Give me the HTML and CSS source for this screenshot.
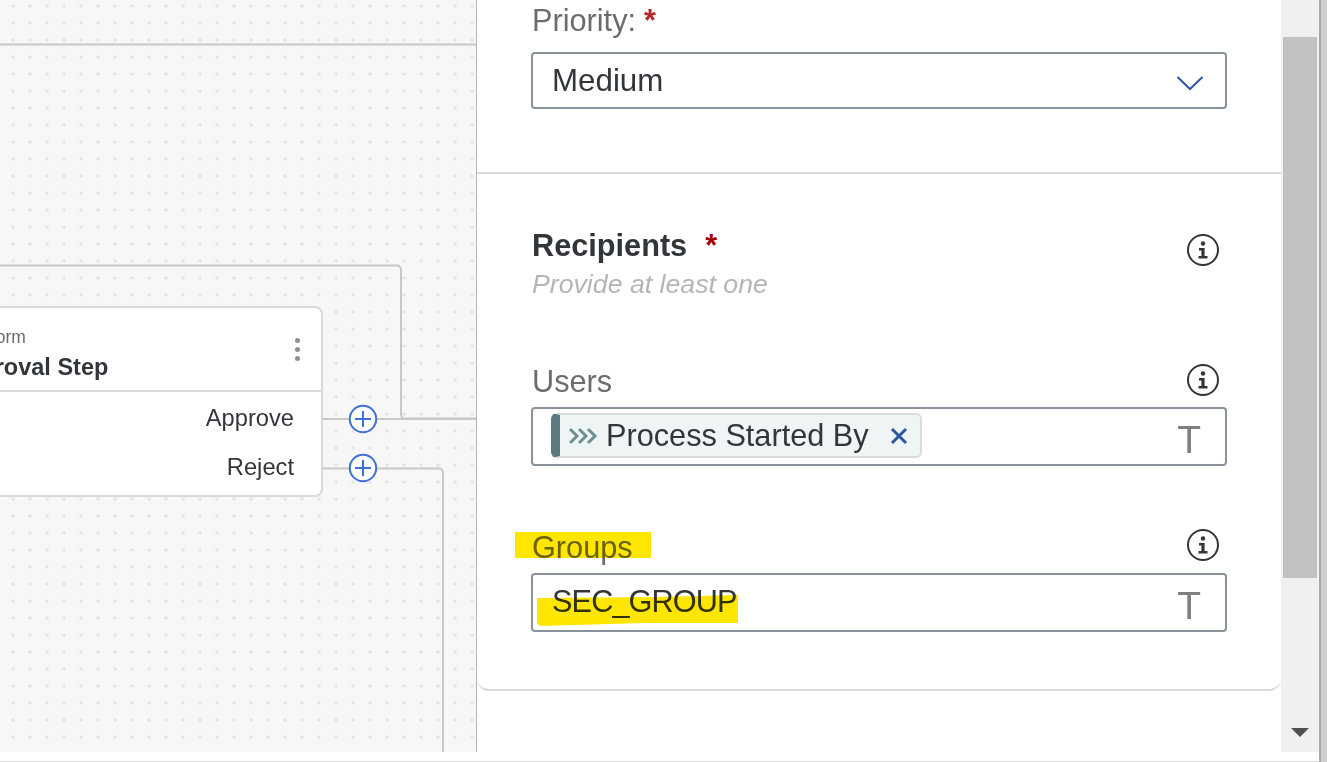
FILE: index.html
```html
<!DOCTYPE html>
<html lang="en">
<head>
    <meta charset="UTF-8">
    <meta name="viewport" content="width=device-width, initial-scale=1.0">
    <title>Form Step - Properties</title>
    <link rel="stylesheet" href="styles.css">
</head>
<body>
    <div class="window">
        <div class="canvas">
            <svg class="links" width="476" height="752">
                <path d="M0 44.5H476"/>
                <path d="M0 265.5H397a4 4 0 0 1 4 4V414.5a4 4 0 0 0 4 4H476"/>
                <path d="M322 419H476"/>
                <path d="M322 468.5H439a4 4 0 0 1 4 4V752"/>
            </svg>

            <div class="node">
                <div class="node-head">
                    <div class="node-type">Form</div>
                    <div class="node-name">Approval Step</div>
                    <div class="node-menu"><i></i><i></i><i></i></div>
                </div>
                <div class="node-outcomes">
                    <div>Approve</div>
                    <div>Reject</div>
                </div>
            </div>

            <svg class="add add-approve" width="30" height="30" viewBox="0 0 30 30">
                <circle cx="15" cy="15" r="13.2"/>
                <path d="M15 7V23M7 15H23"/>
            </svg>
            <svg class="add add-reject" width="30" height="30" viewBox="0 0 30 30">
                <circle cx="15" cy="15" r="13.2"/>
                <path d="M15 7V23M7 15H23"/>
            </svg>
        </div>

        <div class="panel">
            <div class="section section-top">
                <label class="field-label">Priority:<span class="req">*</span></label>
                <div class="input">
                    <span>Medium</span>
                    <svg class="chevron" width="28" height="16" viewBox="0 0 28 16"><path d="M1.5 2L14 14L26.5 2"/></svg>
                </div>
            </div>

            <div class="section section-recipients">
                <div class="title-row">
                    <div>
                        <h2>Recipients<span class="req-bold">*</span></h2>
                        <p class="hint">Provide at least one</p>
                    </div>
                    <svg class="info" width="34" height="34" viewBox="0 0 34 34">
                        <circle cx="17" cy="17" r="15"/>
                        <circle class="dot" cx="17" cy="10.5" r="2.2"/>
                        <path class="stem" d="M13 15H18.6V23H21.5V25.5H12.5V23H15.4V17.5H13Z"/>
                    </svg>
                </div>

                <div class="label-row label-users">
                    <label class="field-label">Users</label>
                    <svg class="info" width="34" height="34" viewBox="0 0 34 34">
                        <circle cx="17" cy="17" r="15"/>
                        <circle class="dot" cx="17" cy="10.5" r="2.2"/>
                        <path class="stem" d="M13 15H18.6V23H21.5V25.5H12.5V23H15.4V17.5H13Z"/>
                    </svg>
                </div>
                <div class="input input-tall">
                    <div class="token">
                        <svg class="token-icon" width="30" height="18" viewBox="0 0 30 18">
                            <path d="M2 2L9 9L2 16M11 2L18 9L11 16M20 2L27 9L20 16"/>
                        </svg>
                        <span>Process Started By</span>
                        <svg class="token-close" width="20" height="20" viewBox="0 0 20 20"><path d="M3 3L17 17M17 3L3 17"/></svg>
                    </div>
                    <span class="type-icon">T</span>
                </div>

                <div class="label-row">
                    <label class="field-label">Groups</label>
                    <svg class="info" width="34" height="34" viewBox="0 0 34 34">
                        <circle cx="17" cy="17" r="15"/>
                        <circle class="dot" cx="17" cy="10.5" r="2.2"/>
                        <path class="stem" d="M13 15H18.6V23H21.5V25.5H12.5V23H15.4V17.5H13Z"/>
                    </svg>
                </div>
                <div class="input input-tall">
                    <span class="group-value">SEC_GROUP</span>
                    <span class="type-icon">T</span>
                </div>
            </div>

            <!-- marker pen strokes added on top of the screenshot -->
            <div class="marker marker-label"></div>
            <svg class="marker-value" width="204" height="32" viewBox="0 0 204 32">
                <path d="M2 4L120 3L203 1V29L110 29L40 31L6 32L2 30Z"/>
            </svg>
        </div>

        <div class="scrollbar">
            <div class="scroll-thumb"></div>
            <div class="scroll-down"></div>
        </div>
        <div class="window-edge"></div>
        <div class="window-side"></div>
    </div>
    <div class="bottom-strip"></div>
</body>
</html>
```

FILE: styles.css
```css
* {
    margin: 0;
    padding: 0;
    box-sizing: border-box;
}

body {
    font-family: 'Liberation Sans', Arial, sans-serif;
    background-color: white;
    width: 1327px;
    height: 762px;
    overflow: hidden;
}

.window {
    display: flex;
    height: 761px;
}

/* workflow canvas */
.canvas {
    position: relative;
    width: 477px;
    height: 752px;
    overflow: hidden;
    background-color: #f7f7f7;
    background-image: radial-gradient(circle at center, #e3e3e3 1.4px, transparent 1.5px);
    background-size: 17px 17px;
    background-position: 4.5px -2.5px;
    border-right: 1px solid #b5b5b5;
}

.links {
    position: absolute;
    left: 0;
    top: 0;
}

.links path {
    fill: none;
    stroke: #c8c8c8;
    stroke-width: 2;
}

.node {
    position: absolute;
    left: -120px;
    top: 306px;
    width: 443px;
    height: 191px;
    background-color: white;
    border: 2px solid #d9d9d9;
    border-radius: 8px;
}

.node-head {
    position: relative;
    height: 84px;
    padding: 16px 0 0 67px;
    border-bottom: 2px solid #d9d9d9;
}

.node-type {
    margin-left: 36px;
    font-size: 17.5px;
    color: #6a6d70;
    line-height: 26px;
}

.node-name {
    margin-top: 1px;
    font-size: 23.5px;
    font-weight: bold;
    color: #32363a;
    line-height: 32px;
}

.node-menu {
    position: absolute;
    right: 21px;
    top: 30px;
    display: flex;
    flex-direction: column;
    gap: 4px;
}

.node-menu i {
    display: block;
    width: 5px;
    height: 5px;
    border-radius: 50%;
    background-color: #89919a;
}

.node-outcomes {
    padding: 2px 27px 0 0;
    text-align: right;
    font-size: 23.7px;
    color: #32363a;
}

.node-outcomes div {
    height: 49px;
    line-height: 49px;
}

.add {
    position: absolute;
    left: 348px;
}

.add circle {
    fill: white;
    stroke: #3f6fd8;
    stroke-width: 2;
}

.add path {
    fill: none;
    stroke: #3f6fd8;
    stroke-width: 2;
}

.add-approve {
    top: 404px;
}

.add-reject {
    top: 453px;
}

/* properties panel */
.panel {
    position: relative;
    width: 804px;
    height: 752px;
    background-color: white;
    color: #32363a;
}

.section {
    padding: 0 54px;
}

.section-top {
    height: 174px;
    border-bottom: 2px solid #d9d9d9;
}

.section-recipients {
    height: 517px;
    border-bottom: 2px solid #d9d9d9;
    border-radius: 0 0 12px 12px;
}

.field-label {
    display: block;
    padding-left: 1px;
    font-size: 30.7px;
    line-height: 42px;
    color: #6a6d70;
}

.label-row .field-label {
    margin-top: 3px;
}

.req {
    color: #b3272a;
    font-weight: bold;
    margin-left: 8px;
}

.input {
    display: flex;
    align-items: center;
    justify-content: space-between;
    height: 57px;
    padding: 0 21px 0 19px;
    border: 2px solid #89919a;
    border-radius: 4px;
    font-size: 30.7px;
    color: #32363a;
}

.section-top .input {
    margin-top: 10px;
    font-size: 31.3px;
}

.input-tall {
    height: 59px;
    padding: 0 24px 0 18px;
}

.group-value {
    margin: 0 0 2px 1px;
    letter-spacing: -0.9px;
}

.chevron {
    margin-top: 4px;
}

.chevron path {
    fill: none;
    stroke: #2f55a4;
    stroke-width: 2;
}

.title-row {
    display: flex;
    justify-content: space-between;
    align-items: flex-start;
    padding-top: 50px;
    padding-right: 7px;
}

.title-row .info {
    margin-top: 9px;
}

h2 {
    padding-left: 1px;
    font-size: 30.7px;
    font-weight: bold;
    line-height: 44px;
}

.req-bold {
    color: #a5000c;
    margin-left: 18px;
}

.hint {
    padding-left: 1px;
    font-size: 26.7px;
    font-style: italic;
    color: #b5b5b5;
    line-height: 32px;
}

.label-row {
    display: flex;
    justify-content: space-between;
    align-items: center;
    height: 54px;
    margin-top: 53px;
    padding-right: 7px;
}

.label-row .info {
    margin-bottom: 2px;
}

.label-users .info {
    margin-bottom: 0;
}

.info circle {
    fill: none;
    stroke: #32363a;
    stroke-width: 2;
}

.info .dot,
.info .stem {
    fill: #32363a;
    stroke: none;
}

.token {
    display: flex;
    align-items: center;
    width: 371px;
    height: 45px;
    margin-bottom: 2px;
    padding-left: 8px;
    background-color: #eff4f4;
    border: 2px solid #d9dcdc;
    border-left: 9px solid #5b7b7f;
    border-radius: 6px;
}

.token-icon {
    margin-right: 8px;
}

.token-icon path {
    fill: none;
    stroke: #6f9093;
    stroke-width: 3;
}

.token-close {
    margin-left: 20px;
}

.token-close path {
    fill: none;
    stroke: #2f55a4;
    stroke-width: 3;
}

.type-icon {
    margin-top: 6px;
    font-size: 39px;
    color: #808080;
    line-height: 1;
}

/* yellow marker */
.marker {
    position: absolute;
    left: 38px;
    top: 532px;
    width: 136px;
    height: 26px;
    background-color: #ffe600;
    mix-blend-mode: multiply;
}

.marker-value {
    position: absolute;
    left: 58px;
    top: 594px;
    mix-blend-mode: multiply;
}

.marker-value path {
    fill: #ffe600;
}

/* scrollbar */
.scrollbar {
    position: relative;
    width: 38px;
    height: 752px;
    background-color: #f0f0f0;
    padding: 37px 2px 0;
}

.scroll-thumb {
    height: 541px;
    background-color: #c1c1c1;
}

.scroll-down {
    position: absolute;
    left: 10px;
    top: 728px;
    width: 0;
    height: 0;
    border-left: 9px solid transparent;
    border-right: 9px solid transparent;
    border-top: 9px solid #505050;
}

.window-edge {
    width: 2px;
    height: 762px;
    background-color: #a9a9a9;
}

.window-side {
    width: 6px;
    height: 762px;
    background-color: #cfcfcf;
}

.bottom-strip {
    height: 1px;
    width: 1319px;
    background-color: #d9d9d9;
}
```
